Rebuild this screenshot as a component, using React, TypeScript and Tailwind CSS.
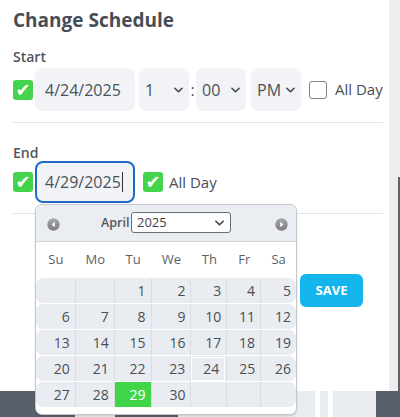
import React from "react";

const font = { fontFamily: '"Open Sans", "Liberation Sans", sans-serif' };

function GreenCheck() {
  return (
    <div className="w-[20px] h-[20px] rounded-[3px] bg-[#44d34c] flex items-center justify-center shrink-0">
      <span className="text-white text-[18px] leading-none" style={{ fontFamily: '"DejaVu Sans", sans-serif' }}>✔</span>
    </div>
  );
}

function Chevron() {
  return (
    <svg width="9" height="6" viewBox="0 0 10 6" className="shrink-0">
      <path d="M1 1 L5 5 L9 1" fill="none" stroke="#3e444c" strokeWidth="1.7" strokeLinecap="round" strokeLinejoin="round" />
    </svg>
  );
}

function Sel({ v }: { v: string }) {
  return (
    <div className="w-[50px] h-[43px] rounded-[7px] bg-[#f1f3f6] flex items-center justify-between pl-[6px] pr-[6px] text-[16px] text-[#4b515a]">
      <span>{v}</span>
      <Chevron />
    </div>
  );
}

const widths = [40, 39, 37, 40, 36, 34, 35];
const weeks: (number | null)[][] = [
  [null, null, 1, 2, 3, 4, 5],
  [6, 7, 8, 9, 10, 11, 12],
  [13, 14, 15, 16, 17, 18, 19],
  [20, 21, 22, 23, 24, 25, 26],
  [27, 28, 29, 30, null, null, null],
];

function CircleArrow({ dir }: { dir: "l" | "r" }) {
  return (
    <svg width="13" height="13" viewBox="0 0 13 13">
      <defs>
        <linearGradient id={"g" + dir} x1="0" y1="0" x2="0" y2="1">
          <stop offset="0" stopColor="#a8a8a8" />
          <stop offset="1" stopColor="#7c7c7c" />
        </linearGradient>
      </defs>
      <circle cx="6.5" cy="6.5" r="6.2" fill={"url(#g" + dir + ")"} />
      {dir === "l" ? (
        <path d="M7.8 3.8 L4.6 6.5 L7.8 9.2 Z" fill="white" />
      ) : (
        <path d="M5.2 3.8 L8.4 6.5 L5.2 9.2 Z" fill="white" />
      )}
    </svg>
  );
}

function Calendar() {
  return (
    <div className="absolute left-[35px] top-[204px] w-[262px] h-[211px] rounded-[7px] border border-[#c4c7cc] bg-white overflow-hidden shadow-[0_1px_2px_rgba(0,0,0,0.15)]">
      <div className="h-[37px] bg-[#eaedf1] border-b border-[#d4d7dc] flex items-center relative">
        <div className="absolute left-[11px] top-[13px]"><CircleArrow dir="l" /></div>
        <div className="absolute left-[239px] top-[13px]"><CircleArrow dir="r" /></div>
        <span className="absolute left-[65px] top-[9px] text-[12.5px] font-semibold text-[#51565e]">April</span>
        <div className="absolute left-[95px] top-[7px] w-[100px] h-[21px] bg-white border border-[#6b6f75] rounded-[3px] flex items-center justify-between pl-[5px] pr-[6px] text-[13px] text-[#3f444b]">
          <span>2025</span>
          <svg width="9" height="6" viewBox="0 0 10 6"><path d="M1 1 L5 5 L9 1" fill="none" stroke="#3e444c" strokeWidth="1.8" strokeLinecap="round" strokeLinejoin="round" /></svg>
        </div>
      </div>
      <div className="h-[36px] flex items-center text-[13px] text-[#5a5f66]">
        {["Su", "Mo", "Tu", "We", "Th", "Fr", "Sa"].map((d, i) => (
          <div key={d} className="text-center" style={{ width: widths[i] }}>{d}</div>
        ))}
      </div>
      <div className="flex flex-col gap-[1px]">
        {weeks.map((w, r) => (
          <div key={r} className="h-[25px] flex rounded-[7px] bg-[#e9ecf0] overflow-hidden">
            {w.map((d, i) => {
              const sel = d === 29;
              const today = d === 24;
              return (
                <div
                  key={i}
                  className={
                    "h-full flex items-center justify-end pr-[5px] text-[14px] " +
                    (i < 6 ? "border-r border-[#dadde2] " : "") +
                    (sel ? "bg-[#40d549] text-white font-medium " : "text-[#4a4f57] ") +
                    (today ? "text-[#1e3a68]" : "")
                  }
                  style={{ width: widths[i] }}
                >
                  {today ? (
                    <div className="w-[34px] h-[24px] border border-white flex items-center justify-end pr-[5px] -mr-[4px]">{d}</div>
                  ) : (
                    d
                  )}
                </div>
              );
            })}
          </div>
        ))}
      </div>
    </div>
  );
}

export default function App() {
  return (
    <div className="relative w-[400px] h-[417px] overflow-hidden bg-[#58616b]" style={font}>
      <div className="flex h-[391px]">
        <div className="w-[389px] h-full bg-white pl-[13px] flex flex-col">
          <div className="mt-[7px] h-[26px] text-[19px] font-bold text-[#474d56] leading-[26px]">Change Schedule</div>
          <div className="mt-[16px] h-[16px] text-[14px] font-semibold text-[#50565f] leading-[16px]">Start</div>
          <div className="mt-[3px] flex items-center">
            <GreenCheck />
            <div className="ml-[2px] w-[100px] h-[43px] rounded-[7px] bg-[#f1f3f6] flex items-center pl-[10px] text-[16px] text-[#4b515a]">4/24/2025</div>
            <div className="ml-[4px]"><Sel v="1" /></div>
            <div className="w-[7px] text-center text-[16px] text-[#4b515a]">:</div>
            <Sel v="00" />
            <div className="ml-[5px]"><Sel v="PM" /></div>
            <div className="ml-[8px] w-[18px] h-[18px] rounded-[3px] border border-[#7d838b] bg-white" />
            <div className="ml-[8px] text-[15px] font-medium text-[#474d56]">All Day</div>
          </div>
          <div className="mt-[11px] w-[370px] h-[1px] bg-[#e2e3e5]" />
          <div className="mt-[22px] h-[16px] text-[14px] font-semibold text-[#50565f] leading-[16px]">End</div>
          <div className="flex items-center">
            <GreenCheck />
            <div className="ml-[2px] w-[100px] h-[42px] rounded-[8px] bg-[#f1f3f6] border-2 border-[#1b6cc2] flex items-center pl-[8px] text-[16px] text-[#4b515a]">
              4/29/2025<span className="ml-[1px] w-[1px] h-[20px] bg-[#333]" />
            </div>
            <div className="ml-[8px]"><GreenCheck /></div>
            <div className="ml-[6px] text-[15px] font-medium text-[#474d56]">All Day</div>
          </div>
          <div className="mt-[10px] w-[370px] h-[1px] bg-[#e2e3e5]" />
          <div className="mt-[60px] ml-[287px] w-[63px] h-[33px] rounded-[6px] bg-[#14b4ec] flex items-center justify-center text-white text-[13px] font-bold">SAVE</div>
        </div>
        <div className="w-[11px] h-full bg-[#ededed] flex justify-end">
          <div className="mt-[177px] w-[2px] h-[214px] bg-[#5c636b]" />
        </div>
      </div>
      <div className="flex h-[26px]">
        <div className="w-[75px] bg-[#58616b]" />
        <div className="w-[40px] bg-[#e9ecf0]" />
        <div className="w-[63px] bg-[#58616b]" />
        <div className="w-[137px] bg-[#e9ecf0]" />
        <div className="w-[5px] bg-white" />
        <div className="w-[8px] bg-[#e9ecf0]" />
        <div className="w-[5px] bg-white" />
        <div className="w-[43px] bg-[#e9ecf0]" />
        <div className="flex-1 bg-[#58616b]" />
      </div>
      <Calendar />
    </div>
  );
}
